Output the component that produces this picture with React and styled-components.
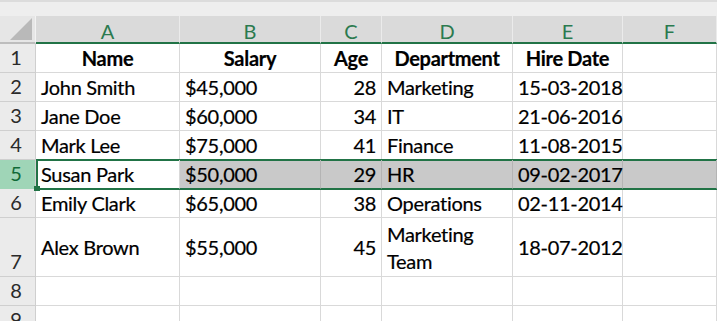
import React from "react";
import styled, { createGlobalStyle, css } from "styled-components";

const GREEN = "#217346";

const Global = createGlobalStyle`
  html, body { margin: 0; padding: 0; background: #ffffff; overflow: hidden; }
  body { font-family: "Lato", "Noto Sans", sans-serif; }
`;

const Page = styled.div`
  width: 717px;
  height: 321px;
  overflow: hidden;
  display: flex;
  flex-direction: column;
`;

const TopStrip = styled.div`
  height: 16px;
  flex: none;
  background: #eeeeee;
  border-top: 2px solid #dcdcdc;
  box-sizing: border-box;
`;

const Sheet = styled.div`
  display: grid;
  grid-template-columns: 36px 144px 141px 61px 131px 110px 1fr;
  grid-template-rows: 28px repeat(6, 29px) 59px 29px 29px;
  font-family: "Lato", "Noto Sans", sans-serif;
  font-size: 20px;
  color: #000;
`;

const Corner = styled.div`
  background: #e6e6e6;
  border-bottom: 2px solid #bdbdbd;
  border-right: 1px solid #f2f2f2;
  box-sizing: border-box;
  display: flex;
  align-items: flex-end;
  justify-content: flex-end;
  padding: 0 3px 2px 0;
`;

const ColHead = styled.div`
  background: #dadada;
  border-bottom: 2px solid ${GREEN};
  border-right: 1px solid #ebebeb;
  box-sizing: border-box;
  display: flex;
  align-items: center;
  justify-content: center;
  color: #2b7a4f;
  font-size: 20px;
  padding-top: 3px;
`;

const RowHead = styled.div`
  background: ${(p) => (p.$selected ? "#9fd5b7" : "#ebebeb")};
  color: ${(p) => (p.$selected ? "#0f6a36" : "#2a2a2a")};
  border-bottom: 1px solid ${(p) => (p.$selected ? "#9fd5b7" : "#cfcfcf")};
  border-right: 1px solid #cfcfcf;
  box-sizing: border-box;
  display: flex;
  align-items: flex-end;
  justify-content: center;
  padding: 0 3px 3px 0;
  line-height: 24px;
`;

const Cell = styled.div`
  position: relative;
  box-sizing: border-box;
  border-right: 1px solid #d9d9d9;
  border-bottom: 1px solid #d9d9d9;
  display: flex;
  align-items: center;
  padding: 1px 5px 0 5px;
  white-space: nowrap;
  overflow: visible;
  line-height: 27px;
  letter-spacing: -0.3px;
  -webkit-text-stroke: 0.2px #000;
  justify-content: ${(p) =>
    p.$align === "right" ? "flex-end" : p.$align === "center" ? "center" : "flex-start"};
  font-weight: ${(p) => (p.$bold ? 700 : 400)};
  ${(p) =>
    p.$wrap &&
    css`
      white-space: normal;
      line-height: 27px;
    `}
  ${(p) =>
    p.$inSel &&
    css`
      z-index: 1;
      background: ${p.$active ? "#ffffff" : "#c9c9c9"};
      border-right-color: ${p.$active ? "#d9d9d9" : "#b4b4b4"};
      border-bottom: 1px solid ${GREEN};
      box-shadow: inset 0 1px 0 0 ${GREEN}, 0 -1px 0 0 ${GREEN}, 0 1px 0 0 ${GREEN}
        ${p.$active ? `, inset 2px 0 0 0 ${GREEN}` : ""};
    `}
`;

const FillHandle = styled.span`
  position: absolute;
  left: -2px;
  bottom: -3px;
  width: 6px;
  height: 5px;
  background: ${GREEN};
  z-index: 2;
`;

const Triangle = () => (
  <svg width="22" height="22" viewBox="0 0 22 22">
    <polygon points="22,0 22,22 0,22" fill="#b9b9b9" />
  </svg>
);

const columns = ["A", "B", "C", "D", "E", "F"];
const aligns = ["left", "left", "right", "left", "left", "left"];

const rows = [
  { cells: ["Name", "Salary", "Age", "Department", "Hire Date", ""], header: true },
  { cells: ["John Smith", "$45,000", "28", "Marketing", "15-03-2018", ""] },
  { cells: ["Jane Doe", "$60,000", "34", "IT", "21-06-2016", ""] },
  { cells: ["Mark Lee", "$75,000", "41", "Finance", "11-08-2015", ""] },
  { cells: ["Susan Park", "$50,000", "29", "HR", "09-02-2017", ""], selected: true },
  { cells: ["Emily Clark", "$65,000", "38", "Operations", "02-11-2014", ""] },
  { cells: ["Alex Brown", "$55,000", "45", "Marketing Team", "18-07-2012", ""], wrapCol: 3 },
  { cells: ["", "", "", "", "", ""] },
  { cells: ["", "", "", "", "", ""] },
];

export default function App() {
  return (
    <Page>
      <Global />
      <TopStrip />
      <Sheet>
        <Corner>
          <Triangle />
        </Corner>
        {columns.map((c) => (
          <ColHead key={c}>{c}</ColHead>
        ))}
        {rows.map((row, ri) => (
          <React.Fragment key={ri}>
            <RowHead $selected={row.selected}>{ri + 1}</RowHead>
            {row.cells.map((text, ci) => (
              <Cell
                key={ci}
                $align={row.header ? (ci < 5 ? "center" : "left") : aligns[ci]}
                $bold={row.header}
                $wrap={row.wrapCol === ci}
                $inSel={row.selected}
                $active={row.selected && ci === 0}
              >
                {row.wrapCol === ci ? (
                  <span>
                    Marketing
                    <br />
                    Team
                  </span>
                ) : (
                  text
                )}
                {row.selected && ci === 0 && <FillHandle />}
              </Cell>
            ))}
          </React.Fragment>
        ))}
      </Sheet>
    </Page>
  );
}
